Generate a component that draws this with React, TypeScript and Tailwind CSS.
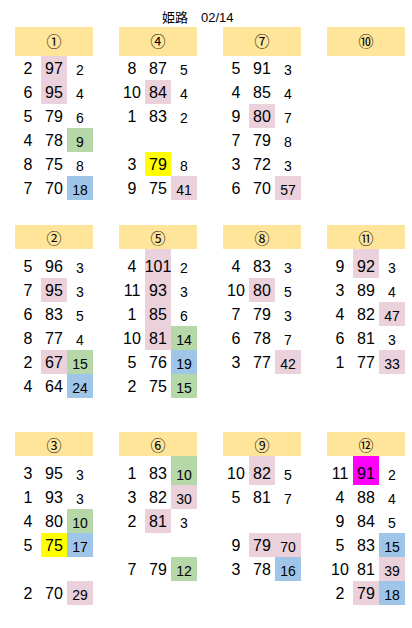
import React from "react";

type Bg = "" | "p" | "g" | "b" | "y" | "m";
type Cell = [number | string, Bg];
type Row = [Cell, Cell, Cell] | null;

const bgClass: Record<Bg, string> = {
  "": "",
  p: "bg-[#ead1dc]",
  g: "bg-[#b6d7a8]",
  b: "bg-[#9fc5e8]",
  y: "bg-[#ffff00]",
  m: "bg-[#ff00ff]",
};

const r = (a: number, b: number | string, c: number | string, bb: Bg = "", cb: Bg = "", ab: Bg = ""): Row => [
  [a, ab],
  [b, bb],
  [c, cb],
];

type Block = { title: string; rows: Row[] };
type Section = { header: "h29" | "h24"; rows: ("h24" | "h29")[]; mt: string; blocks: Block[] };

const sections: Section[] = [
  {
    header: "h29",
    rows: ["h24", "h24", "h24", "h24", "h24", "h24"],
    mt: "",
    blocks: [
      { title: "①", rows: [r(2, 97, 2, "p"), r(6, 95, 4, "p"), r(5, 79, 6), r(4, 78, 9, "", "g"), r(8, 75, 8), r(7, 70, 18, "", "b")] },
      { title: "④", rows: [r(8, 87, 5), r(10, 84, 4, "p"), r(1, 83, 2), null, r(3, 79, 8, "y"), r(9, 75, 41, "", "p")] },
      { title: "⑦", rows: [r(5, 91, 3), r(4, 85, 4), r(9, 80, 7, "p"), r(7, 79, 8), r(3, 72, 3), r(6, 70, 57, "", "p")] },
      { title: "⑩", rows: [null, null, null, null, null, null] },
    ],
  },
  {
    header: "h24",
    rows: ["h29", "h24", "h24", "h24", "h24", "h24"],
    mt: "mt-[25px]",
    blocks: [
      { title: "②", rows: [r(5, 96, 3), r(7, 95, 3, "p"), r(6, 83, 5), r(8, 77, 4), r(2, 67, 15, "p", "g"), r(4, 64, 24, "", "b")] },
      { title: "⑤", rows: [r(4, 101, 2, "p"), r(11, 93, 3, "p"), r(1, 85, 6, "p"), r(10, 81, 14, "p", "g"), r(5, 76, 19, "", "b"), r(2, 75, 15, "", "g")] },
      { title: "⑧", rows: [r(4, 83, 3), r(10, 80, 5, "p"), r(7, 79, 3), r(6, 78, 7), r(3, 77, 42, "", "p"), null] },
      { title: "⑪", rows: [r(9, 92, 3, "p"), r(3, 89, 4), r(4, 82, 47, "", "p"), r(6, 81, 3), r(1, 77, 33, "", "p"), null] },
    ],
  },
  {
    header: "h24",
    rows: ["h29", "h24", "h24", "h24", "h24", "h24"],
    mt: "mt-[34px]",
    blocks: [
      { title: "③", rows: [r(3, 95, 3), r(1, 93, 3), r(4, 80, 10, "", "g"), r(5, 75, 17, "y", "b"), null, r(2, 70, 29, "", "p")] },
      { title: "⑥", rows: [r(1, 83, 10, "", "g"), r(3, 82, 30, "", "p"), r(2, 81, 3, "p"), null, r(7, 79, 12, "", "g"), null] },
      { title: "⑨", rows: [r(10, 82, 5, "p"), r(5, 81, 7), null, r(9, 79, 70, "p", "p"), r(3, 78, 16, "", "b"), null] },
      { title: "⑫", rows: [r(11, 91, 2, "m"), r(4, 88, 4), r(9, 84, 5), r(5, 83, 15, "", "b"), r(10, 81, 39, "", "p"), r(2, 79, 18, "p", "b")] },
    ],
  },
];

function BlockView({ block, sec }: { block: Block; sec: Section }) {
  return (
    <div className="w-[78px] flex flex-col">
      <div
        className={
          "bg-[#ffe599] flex items-center justify-center text-[15px] leading-[15px] font-['Noto_Sans_CJK_JP',sans-serif] " +
          (sec.header === "h29" ? "h-[29px] pb-[3px]" : "h-[24px]")
        }
      >
        {block.title}
      </div>
      {block.rows.map((row, i) => (
        <div key={i} className={"grid grid-cols-[26px_26px_26px] " + (sec.rows[i] === "h29" ? "h-[29px]" : "h-[24px]")}>
          {row
            ? row.map((c, j) => (
                <div
                  key={j}
                  className={
                    "flex items-end justify-center " +
                    bgClass[c[1]] +
                    (j === 2 ? " text-[14px] leading-[14px] pb-[3px]" : " text-[16px] leading-[16px] pb-[3px]")
                  }
                >
                  {c[0]}
                </div>
              ))
            : null}
        </div>
      ))}
    </div>
  );
}

export default function App() {
  return (
    <div className="w-[412px] h-[628px] bg-white text-black pl-[15px] font-['Liberation_Sans','Noto_Sans_CJK_JP',sans-serif] overflow-hidden">
      <div className="h-[27px] flex items-end pl-[147px] pb-[3px] text-[13px] leading-[13px]">
        姫路　02/14
      </div>
      {sections.map((sec, si) => (
        <div key={si} className={"flex gap-[26px] " + sec.mt}>
          {sec.blocks.map((b, bi) => (
            <BlockView key={bi} block={b} sec={sec} />
          ))}
        </div>
      ))}
    </div>
  );
}
